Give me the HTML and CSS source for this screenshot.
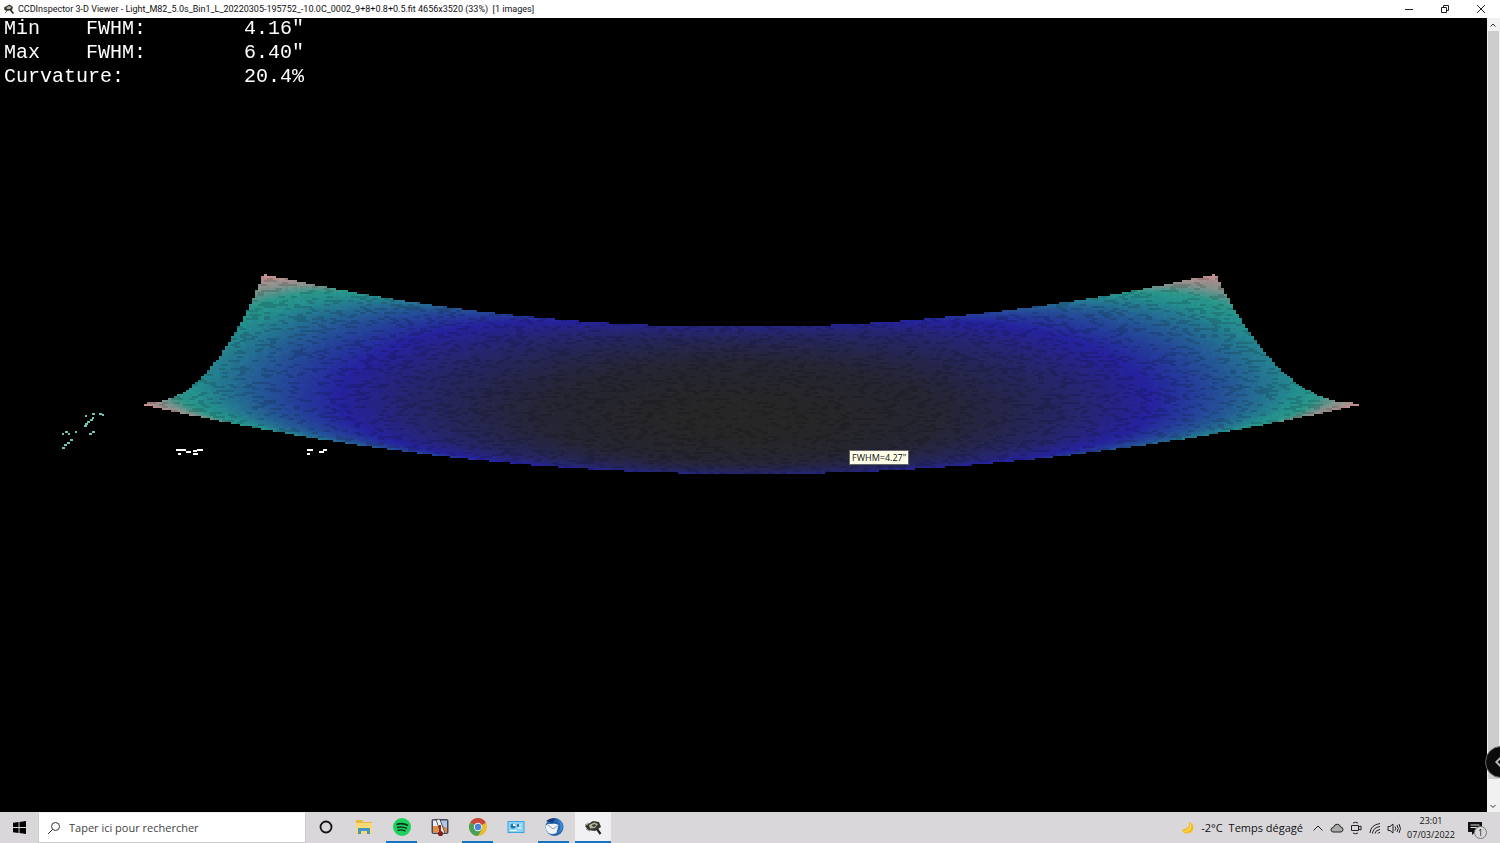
FILE: index.html
```html
<!DOCTYPE html>
<html lang="fr">
<head>
  <meta charset="UTF-8">
  <meta name="viewport" content="width=device-width, initial-scale=1.0">
  <title>CCDInspector 3-D Viewer</title>
  <link rel="stylesheet" href="styles.css">
</head>
<body>

<header class="titlebar">
  <svg class="app-icon" viewBox="0 0 24 24">
    <path d="M2 9 L13 3 L20 8 L18 14 L8 16 L3 14 Z" fill="#33362c"/>
    <path d="M7 9 L13 6 L17 9 L13 12 L8 12 Z" fill="#b9bda8"/>
    <path d="M15 14 L21 21" stroke="#222" stroke-width="3"/>
    <path d="M8 16 L4 20" stroke="#777" stroke-width="2"/>
  </svg>
  <h1 class="title">CCDInspector 3-D Viewer - Light_M82_5.0s_Bin1_L_20220305-195752_-10.0C_0002_9+8+0.8+0.5.fit 4656x3520 (33%)&nbsp; [1 images]</h1>
  <div class="window-buttons">
    <button aria-label="Minimize"><svg viewBox="0 0 10 10"><path d="M1 5.5h8"/></svg></button>
    <button aria-label="Restore"><svg viewBox="0 0 10 10"><path d="M1.5 3.5h5v5h-5zM3.5 3.5v-2h5v5h-2"/></svg></button>
    <button aria-label="Close"><svg viewBox="0 0 10 10"><path d="M1 1l8 8M9 1l-8 8"/></svg></button>
  </div>
</header>

<main class="viewer">
  <div class="scene">
    <canvas id="surface" width="1487" height="794"></canvas>
    <dl class="stats">
      <dt><span>Min</span><span>FWHM:</span></dt><dd>4.16"</dd>
      <dt><span>Max</span><span>FWHM:</span></dt><dd>6.40"</dd>
      <dt>Curvature:</dt><dd>20.4%</dd>
    </dl>
    <div class="tooltip">FWHM=4.27"</div>
  </div>
  <div class="scrollbar">
    <button aria-label="Scroll up"><svg viewBox="0 0 8 8"><path d="M1.5 5.5L4 3l2.500 2.500"/></svg></button>
    <div class="thumb"></div>
    <button aria-label="Scroll down"><svg viewBox="0 0 8 8"><path d="M1.500 3L4 5.500 6.500 3"/></svg></button>
  </div>
  <button class="side-handle" aria-label="Open panel"><svg viewBox="0 0 32 32"><path d="M17 10l-6 6 6 6"/></svg></button>
</main>

<footer class="taskbar">
  <button class="start" aria-label="Start">
    <svg viewBox="0 0 14 14"><path d="M0 2l6-1v5.500H0zM7 1l7-1v6.500H7zM0 7.500h6V13l-6-1zM7 7.500h7V14l-7-1z"/></svg>
  </button>
  <label class="search">
    <svg viewBox="0 0 14 14"><circle cx="8.500" cy="5.500" r="4"/><path d="M5.500 8.500L1 13"/></svg>
    <input type="text" placeholder="Taper ici pour rechercher" aria-label="Taper ici pour rechercher">
  </label>
  <nav class="apps">
    <button aria-label="Cortana"><svg viewBox="0 0 20 20"><circle cx="10" cy="10" r="5.500" fill="none" stroke="#111" stroke-width="1.800"/></svg></button>
    <button aria-label="Explorer">
      <svg viewBox="0 0 20 20">
        <path d="M2 3h6l1 2h9v12H2z" fill="#e9b93c"/>
        <path d="M2 6h16v11H2z" fill="#fbd975"/>
        <path d="M4 17v-6h12v6h-3v-3H7v3z" fill="#3f95cc"/>
      </svg>
    </button>
    <button class="open" aria-label="Spotify">
      <svg viewBox="0 0 20 20">
        <circle cx="10" cy="10" r="9" fill="#1ed05e"/>
        <path d="M4.500 7.500q6-2 11.500 1" stroke="#15301d" stroke-width="1.800" fill="none"/>
        <path d="M5 10.500q5-1.500 10 1M5.500 13.300q4-1.200 8 .8" stroke="#15301d" stroke-width="1.400" fill="none"/>
      </svg>
    </button>
    <button aria-label="Thermometer">
      <svg viewBox="0 0 20 20">
        <rect x="1.500" y="2" width="17" height="15" rx="2" fill="#4a4856"/>
        <path d="M3 3.500h6v12H3z" fill="#e8efff"/><path d="M3 9h6v5l-2 1.500H3z" fill="#e18b43"/>
        <path d="M11 3.500h6v12h-6z" fill="#a9c8ec"/><path d="M13 9l4 2v4.500h-4z" fill="#d98a52"/>
        <path d="M8.500 4l4 11" stroke="#444" stroke-width="4.600" stroke-linecap="round"/>
        <path d="M8.500 4l4 11" stroke="#eee" stroke-width="3" stroke-linecap="round"/>
        <path d="M10 8v8" stroke="#9b2720" stroke-width="2"/><circle cx="10.500" cy="16.500" r="2.600" fill="#842019"/>
      </svg>
    </button>
    <button class="open" aria-label="Chrome">
      <svg viewBox="0 0 20 20">
        <circle cx="10" cy="10" r="9" fill="#e9bd32"/>
        <path d="M10 10L2.200 5.500A9 9 0 0 1 17.800 5.500z" fill="#c9473c"/>
        <path d="M10 10L2.200 5.500A9 9 0 0 0 10 19l4-7z" fill="#4b9e55"/>
        <path d="M10 5.500h7.800L10 10z" fill="#c9473c"/>
        <circle cx="10" cy="10" r="4.200" fill="#f1f1f1"/><circle cx="10" cy="10" r="3.200" fill="#4a82dc"/>
      </svg>
    </button>
    <button aria-label="Control panel">
      <svg viewBox="0 0 20 20">
        <rect x="1.500" y="4" width="17" height="12" fill="#3ba4de"/>
        <rect x="2.500" y="5" width="15" height="10" fill="#8bd2f4"/>
        <circle cx="7" cy="9" r="2.500" fill="#2374aa"/><path d="M7 9V6.500A2.500 2.500 0 0 1 9.500 9z" fill="#fff"/>
        <path d="M11.500 8h4M11.500 11h4M4 13.500h7" stroke="#fff"/><path d="M11 7h2v3h-2z" fill="#2779b3"/>
      </svg>
    </button>
    <button class="open" aria-label="Thunderbird">
      <svg viewBox="0 0 20 20">
        <circle cx="10.500" cy="10" r="9" fill="#2464ac"/>
        <path d="M2 4q5-4 10-2-3 1-3 4z" fill="#133d7a"/>
        <path d="M1.500 9q3-3 5-2 5-1 8 1l-2 8q-4 2-8 0-3-3-3-7z" fill="#eef2f7"/>
        <path d="M4 8l5 4 5-3.500" stroke="#8c9eb5" fill="none"/>
        <path d="M13 3q6 5 1 13 5-2 5-7 0-5-6-6z" fill="#3987d1"/>
      </svg>
    </button>
    <button class="open active" aria-label="CCDInspector">
      <svg viewBox="0 0 20 20">
        <path d="M2 9L10 4l6 1 2 5-6 4-7-1z" fill="#34362f"/>
        <path d="M6 8l5-2.500 4 1.500-3 4-5 .500z" fill="#b4b59b"/>
        <path d="M9 8l3-1 1 2-3 1z" fill="#32362b"/>
        <path d="M14 12l3.500 5" stroke="#222" stroke-width="2.200"/><path d="M2 8l4-2M3 12l4 2" stroke="#8e9188"/>
      </svg>
    </button>
  </nav>
  <div class="tray">
    <button class="weather">
      <svg viewBox="0 0 16 16"><path d="M9 1q2 7-8 9 2 5 7 4 6-1 6-7 0-5-5-6z" fill="#f5b921"/><path d="M10 2q2 7-7 10 5 1 8-3 2-4-1-7z" fill="#ffdc58"/></svg>
      <span>-2°C</span><span>Temps dégagé</span>
    </button>
    <button aria-label="Hidden icons"><svg viewBox="0 0 14 14"><path d="M2.500 9.500L7 5l4.500 4.500"/></svg></button>
    <button aria-label="OneDrive"><svg viewBox="0 0 14 14"><path d="M3 11q-2-.500-2-2.300 0-2 2.300-2.200Q4.500 3 7.500 3.200q2.500.2 3 2.800 2.500.2 2.500 2.500 0 2-2 2.500z" fill="#aaa"/></svg></button>
    <button aria-label="Camera"><svg viewBox="0 0 14 14"><path d="M2.500 4.500h7v5h-7zM9.500 6l2.500-1v4l-2.500-1M4 2q2.500-1.500 5 0M4 12q2.500 1.500 5 0"/></svg></button>
    <button aria-label="Network"><svg viewBox="0 0 14 14"><path d="M2 12Q2.500 4 12 2.500M4.500 12.500Q5 6.500 12 5.500M7 12.500Q7.500 9 12 8.500M10 12.500q0-1 2-1"/></svg></button>
    <button aria-label="Volume"><svg viewBox="0 0 14 14"><path d="M1 5.500h2L6 3v9L3 9.500H1zM8 5.500q1.500 2 0 4M10 4q2.500 3.500 0 7M12 3q3 4.500 0 9"/></svg></button>
    <button class="clock"><time>23:01</time><time>07/03/2022</time></button>
    <button class="notifications" aria-label="Notifications">
      <svg viewBox="0 0 14 14"><path d="M0 1h14v10H7l-3 3v-3H0z" fill="#111" stroke="none"/><path d="M2.500 4h9M2.500 6.500h9" stroke="#ddd"/></svg>
      <span class="badge">1</span>
    </button>
  </div>
</footer>

<script src="surface.js"></script>
</body>
</html>
```
FILE: styles.css
```css
* {
  box-sizing: border-box;
}

body {
  margin: 0;
  height: 100vh;
  display: flex;
  flex-direction: column;
  background: #000;
  font-family: "Open Sans", "Noto Sans", sans-serif;
  color: #111;
  overflow: hidden;
}

button {
  padding: 0;
  border: none;
  background: none;
  font: inherit;
  color: inherit;
}

svg {
  display: block;
  fill: none;
  stroke-width: 1;
}

/* title bar */

.titlebar {
  display: flex;
  align-items: center;
  height: 18px;
  padding-left: 3px;
  background: #fff;
}

.app-icon {
  width: 12px;
  height: 12px;
}

.title {
  flex: 1;
  margin: 0 0 0 3px;
  font-family: Roboto, "Open Sans", sans-serif;
  font-size: 9px;
  font-weight: 400;
  line-height: 18px;
  white-space: nowrap;
}

.window-buttons {
  display: flex;
  padding-right: 1px;
}

.window-buttons button {
  width: 36px;
  height: 16px;
  display: flex;
  align-items: center;
  justify-content: center;
}

.window-buttons svg {
  width: 10px;
  height: 10px;
  stroke: #222;
}

/* 3-D view */

.viewer {
  position: relative;
  flex: 1;
  min-height: 0;
  display: flex;
  overflow: hidden;
}

.scene {
  position: relative;
  flex: 1;
  background: #000;
}

.scene canvas {
  position: absolute;
  width: 100%;
  height: 100%;
}

.stats {
  position: absolute;
  top: -1px;
  left: 4px;
  margin: 0;
  display: grid;
  grid-template-columns: 240px 100px;
  color: #fff;
  font-family: "Liberation Mono", monospace;
  font-size: 20px;
  line-height: 24px;
}

.stats dt {
  display: flex;
}

.stats dt span {
  min-width: 82px;
}

.stats dd {
  margin: 0;
}

.tooltip {
  position: absolute;
  left: 57.1%;
  top: 54.4%;
  height: 15px;
  padding: 0 2px;
  border: 1px solid #666;
  background: #ffffe9;
  font-size: 9px;
  line-height: 13px;
  white-space: nowrap;
}

.scrollbar {
  width: 13px;
  display: flex;
  flex-direction: column;
  background: #f1f1f1;
}

.scrollbar button {
  height: 13px;
  padding-left: 2px;
}

.scrollbar svg {
  width: 8px;
  height: 8px;
  stroke: #333;
}

.thumb {
  flex: 1;
  margin: 0 1px 20px;
  background: #cdcdcd;
}

.side-handle {
  position: absolute;
  right: -17px;
  bottom: 34px;
  width: 32px;
  height: 32px;
  border: 1px solid #666;
  border-radius: 50%;
  background: #0b0b0b;
}

.side-handle svg {
  width: 30px;
  height: 30px;
  stroke: #bbb;
  stroke-width: 2;
}

/* task bar */

.taskbar {
  display: flex;
  height: 31px;
  background: #d9d7da;
}

.start {
  width: 38px;
  display: flex;
  align-items: center;
  justify-content: center;
}

.start svg {
  width: 13px;
  height: 13px;
  fill: #000;
}

.search {
  width: 268px;
  display: flex;
  align-items: center;
  gap: 8px;
  padding-left: 8px;
  border: 1px solid #ccc;
  border-top-color: #eee;
  background: #fff;
}

.search svg {
  width: 14px;
  height: 14px;
  stroke: #333;
}

.search input {
  flex: 1;
  min-width: 0;
  padding: 0;
  border: none;
  outline: none;
  background: none;
  font: 11px "Open Sans", sans-serif;
}

.search input::placeholder {
  color: #444;
}

.apps {
  display: flex;
  padding-left: 1px;
}

.apps button {
  width: 31px;
  margin: 0 4px 0 3px;
  display: flex;
  align-items: center;
  justify-content: center;
  border-bottom: 2px solid transparent;
}

.apps svg {
  width: 20px;
  height: 20px;
}

.apps .open {
  border-bottom-color: #1673bd;
}

.apps .active {
  width: 36px;
  margin: 0 0 0 2px;
  background: #f0eff1;
}

.tray {
  margin-left: auto;
  display: flex;
  align-items: center;
  font-size: 11px;
  padding-right: 13px;
}

.tray svg {
  width: 14px;
  height: 14px;
  stroke: #222;
}

.tray button {
  margin-right: 5px;
}

.tray .weather {
  display: flex;
  align-items: center;
  gap: 6px;
  margin-right: 8px;
}

.tray .weather svg {
  stroke: none;
}

.tray .clock {
  width: 50px;
  margin-right: 12px;
  font-size: 9px;
  line-height: 14px;
  text-align: center;
}

.clock time {
  display: block;
}

.tray .notifications {
  position: relative;
  margin-right: 5px;
}

.badge {
  position: absolute;
  left: 6px;
  top: 5px;
  width: 13px;
  height: 13px;
  border: 1px solid #777;
  border-radius: 50%;
  background: #d9d7da;
  font-size: 9px;
  line-height: 11px;
}
```
FILE: surface.js
```js
const canvas = document.getElementById("surface");
const ctx = canvas.getContext("2d");

const CELL_W = 3;
const CELL_H = 2;

// curvature value -> colour
const stops = [
  [0, 38, 38, 38],
  [0.12, 37, 37, 52],
  [0.34, 37, 37, 112],
  [0.49, 37, 34, 158],
  [0.68, 36, 84, 150],
  [0.88, 36, 142, 142],
  [0.96, 42, 150, 138],
  [1.06, 130, 145, 140],
  [1.2, 195, 142, 142]
];

function colorAt(t) {
  t = Math.min(Math.max(t, 0), 1.2);
  let i = 1;
  while (i < stops.length - 1 && stops[i][0] < t) i++;
  const a = stops[i - 1];
  const b = stops[i];
  const k = (t - a[0]) / (b[0] - a[0]);
  return [1, 2, 3].map(n => a[n] + (b[n] - a[n]) * k);
}

function noise(x, y) {
  const n = Math.sin(x * 12.9898 + y * 78.233) * 43758.5453;
  return n - Math.floor(n);
}

// v runs from the back edge (0) to the front edge (1)
function acrossAt(x, v) {
  return (x - 738 - 12 * v) / (476 + 131 * v);
}

function heightAt(u, v) {
  return 257 + 129 * (1 - Math.pow(1 - v, 2.2)) + (53 + 16 * v) * (1 - u * u);
}

function drawSurface() {
  for (let x = 141; x < 1358; x += CELL_W) {
    let start = 0;
    while (start < 1 && Math.abs(acrossAt(x, start)) > 1) start += 0.002;
    if (start >= 1) continue;
    for (let y = 256; y < 460; y += CELL_H) {
      if (heightAt(acrossAt(x, start), start) > y + 2) continue;
      if (heightAt(acrossAt(x, 1), 1) < y) continue;
      let lo = start;
      let hi = 1;
      for (let i = 0; i < 14; i++) {
        const mid = (lo + hi) / 2;
        if (heightAt(acrossAt(x, mid), mid) < y) lo = mid;
        else hi = mid;
      }
      const u = acrossAt(x, lo);
      const w = 2 * Math.pow(lo, 0.72) - 1;
      const t = 0.84 * u * u + 0.38 * w * w;
      const dash = noise(Math.floor((x + y * 2) / 6), y);
      const shade = dash < 0.25 ? 0.86 : 0.97 + noise(x, y) * 0.06;
      const c = colorAt(t).map(n => Math.round(n * shade));
      ctx.fillStyle = `rgb(${c})`;
      ctx.fillRect(x, y, CELL_W, CELL_H);
    }
  }
}

function drawDots(color, dots) {
  ctx.fillStyle = color;
  dots.forEach(([x, y, w]) => ctx.fillRect(x, y, w, 2));
}

drawSurface();

// edge-on axis labels
drawDots("#6fc4b8", [
  [85, 397, 2], [92, 395, 3], [99, 395, 3], [102, 396, 2],
  [92, 399, 2], [90, 401, 3], [87, 403, 3], [85, 405, 3], [84, 407, 3],
  [92, 413, 3], [89, 415, 3], [62, 415, 2], [65, 413, 3], [68, 415, 2], [75, 413, 2],
  [70, 421, 3], [67, 424, 3], [64, 426, 3], [62, 429, 3]
]);
drawDots("#fff", [
  [176, 431, 10], [178, 435, 3], [186, 433, 5], [193, 432, 4], [197, 431, 6], [193, 435, 5],
  [307, 431, 6], [307, 435, 3], [319, 433, 5], [323, 431, 4]
]);
```
